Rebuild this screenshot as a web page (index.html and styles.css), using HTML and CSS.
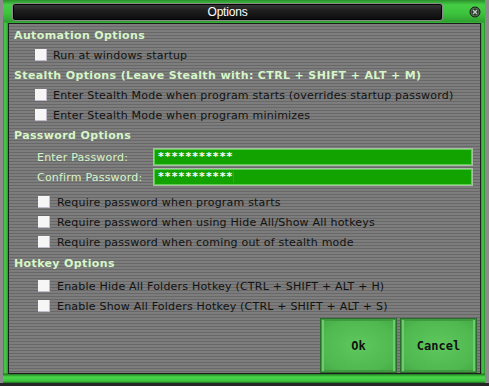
FILE: index.html
```html
<!DOCTYPE html>
<html>
<head>
<meta charset="utf-8">
<link rel="stylesheet" href="styles.css">
</head>
<body>
<div class="window">
  <div class="frame">
    <div class="titlebar">
      <div class="title">Options</div>
      <div class="close">
        <svg width="12" height="12" viewBox="0 0 12 12">
          <circle cx="6" cy="6" r="5" fill="#2b3a2b" stroke="#1a1a1a" stroke-width="1"/>
          <circle cx="6" cy="6" r="4" fill="none" stroke="#6a7a6a" stroke-width="0.8"/>
          <path d="M4 4 L8 8 M8 4 L4 8" stroke="#c8d8c8" stroke-width="1.2"/>
        </svg>
      </div>
    </div>
    <div class="panel">
      <div class="section-title">Automation Options</div>
      <div class="row"><span class="box"></span>Run at windows startup</div>

      <div class="section-title gap">Stealth Options (Leave Stealth with: CTRL + SHIFT + ALT + M)</div>
      <div class="row"><span class="box"></span>Enter Stealth Mode when program starts (overrides startup password)</div>
      <div class="row"><span class="box"></span>Enter Stealth Mode when program minimizes</div>

      <div class="section-title gap">Password Options</div>
      <div class="pw-block">
        <div class="pw-row"><span class="pw-label">Enter Password:</span><span class="pw-input">***********</span></div>
        <div class="pw-row"><span class="pw-label">Confirm Password:</span><span class="pw-input">***********<span class="caret"></span></span></div>
      </div>
      <div class="sub-block first">
        <div class="row sub"><span class="box"></span>Require password when program starts</div>
        <div class="row sub"><span class="box"></span>Require password when using Hide All/Show All hotkeys</div>
        <div class="row sub"><span class="box"></span>Require password when coming out of stealth mode</div>
      </div>

      <div class="section-title gap3">Hotkey Options</div>
      <div class="sub-block hot">
        <div class="row sub"><span class="box"></span>Enable Hide All Folders Hotkey (CTRL + SHIFT + ALT + H)</div>
        <div class="row sub"><span class="box"></span>Enable Show All Folders Hotkey (CTRL + SHIFT + ALT + S)</div>
      </div>

      <div class="buttons">
        <div class="btn">Ok</div>
        <div class="btn">Cancel</div>
      </div>
    </div>
  </div>
</div>
</body>
</html>
```
FILE: styles.css
```css
html, body {
  margin: 0;
  padding: 0;
}
body {
  width: 489px;
  height: 386px;
  overflow: hidden;
  font-family: "DejaVu Sans", "Liberation Sans", sans-serif;
  font-size: 11px;
  background: #8a8a8a;
}
.window {
  width: 489px;
  height: 386px;
  background: linear-gradient(to bottom, #8c8c8c 0, #8c8c8c 383px, #262626 383px);
  display: flex;
}
.frame {
  margin-left: 3px;
  width: 482px;
  height: 383px;
  box-sizing: border-box;
  padding: 0 4px 9px 5px;
  display: flex;
  flex-direction: column;
  background:
    linear-gradient(to bottom, #2b8f2b 0, #45cf45 5px, #3cc23c 14px, #2f9f2f 22px, rgba(0,0,0,0) 23px),
    linear-gradient(to bottom, rgba(0,0,0,0) 373px, #1f7a1f 374px, #4ad84a 377px, #3cc43c 381px, #1e6e1e 383px),
    linear-gradient(to right, #2a8a2a 0, #4ad24a 2px, #2e9a2e 5px, rgba(0,0,0,0) 5px, rgba(0,0,0,0) 478px, #2e9a2e 478px, #46cc46 480px, #2a8a2a 482px);
  background-color: #3cbf3c;
}
.titlebar {
  height: 23px;
  display: flex;
  align-items: center;
  flex-shrink: 0;
}
.title {
  margin-left: 4px;
  width: 432px;
  height: 18px;
  box-sizing: border-box;
  border: 1px solid #8a8a8a;
  border-radius: 3px;
  background: linear-gradient(to bottom, #3a3a3a 0, #1e1e1e 40%, #0c0c0c 100%);
  box-shadow: inset 0 0 0 1px #050505;
  color: #ffffff;
  font-family: "Liberation Sans", sans-serif;
  font-size: 12px;
  line-height: 16px;
  text-align: center;
  letter-spacing: -0.2px;
}
.close {
  margin-left: 26px;
  width: 12px;
  height: 12px;
  display: flex;
}
.panel {
  flex: 1;
  box-sizing: border-box;
  border: 1px solid #1c1c1c;
  padding: 3px 3px 0 5px;
  display: flex;
  flex-direction: column;
  background: repeating-linear-gradient(to bottom, #7d7d7d 0, #7d7d7d 2px, #686868 2px, #686868 3px);
}
.section-title {
  height: 18px;
  line-height: 18px;
  font-weight: bold;
  color: #d6f6c8;
  white-space: nowrap;
  letter-spacing: 0.37px;
}
.section-title.gap { margin-top: 2px; }
.section-title.gap3 { margin-top: 3px; }
.row {
  height: 20px;
  display: flex;
  align-items: center;
  padding-left: 21px;
  color: #121212;
  white-space: nowrap;
  letter-spacing: 0.21px;
}
.row .box {
  width: 12px;
  height: 12px;
  margin-right: 6px;
  flex-shrink: 0;
  background: #f6f6f6;
  box-shadow: inset -1px -1px 0 #c4bccc;
}
.row.sub { padding-left: 24px; }
.row.sub .box { margin-right: 7px; }
.pw-block { margin-top: 2px; }
.pw-row {
  height: 20px;
  display: flex;
  align-items: center;
  padding-left: 23px;
}
.pw-label {
  width: 116px;
  color: #d6f6c8;
  flex-shrink: 0;
  letter-spacing: 0.2px;
}
.pw-input {
  width: 320px;
  height: 18px;
  box-sizing: border-box;
  border: 1px solid #a9bda9;
  box-shadow: inset 0 0 0 1px #5ccf4c;
  background: #13a300;
  color: #ffffff;
  font-weight: bold;
  padding-left: 4px;
  line-height: 16px;
  display: flex;
  align-items: center;
  letter-spacing: 1.1px;
}
.caret {
  width: 1px;
  height: 12px;
  background: #c040c0;
  margin-left: 0;
}
.sub-block.first { margin-top: 5px; }
.sub-block.hot { margin-top: 3px; }
.buttons {
  margin-top: auto;
  display: flex;
  justify-content: flex-end;
  gap: 3px;
}
.btn {
  width: 77px;
  height: 55px;
  box-sizing: border-box;
  border: 1px solid #2d6a2d;
  box-shadow: inset 0 0 0 1px #3f9a3f, inset 3px 0 0 #6ecc6e, inset -3px 0 0 #6ecc6e, inset 0 2px 0 #3f9a3f, inset 0 -2px 0 #3f9a3f;
  background: radial-gradient(ellipse at center, #5ec85e 0, #4fb84f 70%, #45a845 100%);
  display: flex;
  align-items: center;
  justify-content: center;
  font-family: "DejaVu Sans Mono", monospace;
  font-weight: bold;
  font-size: 12px;
  color: #111;
}
```
